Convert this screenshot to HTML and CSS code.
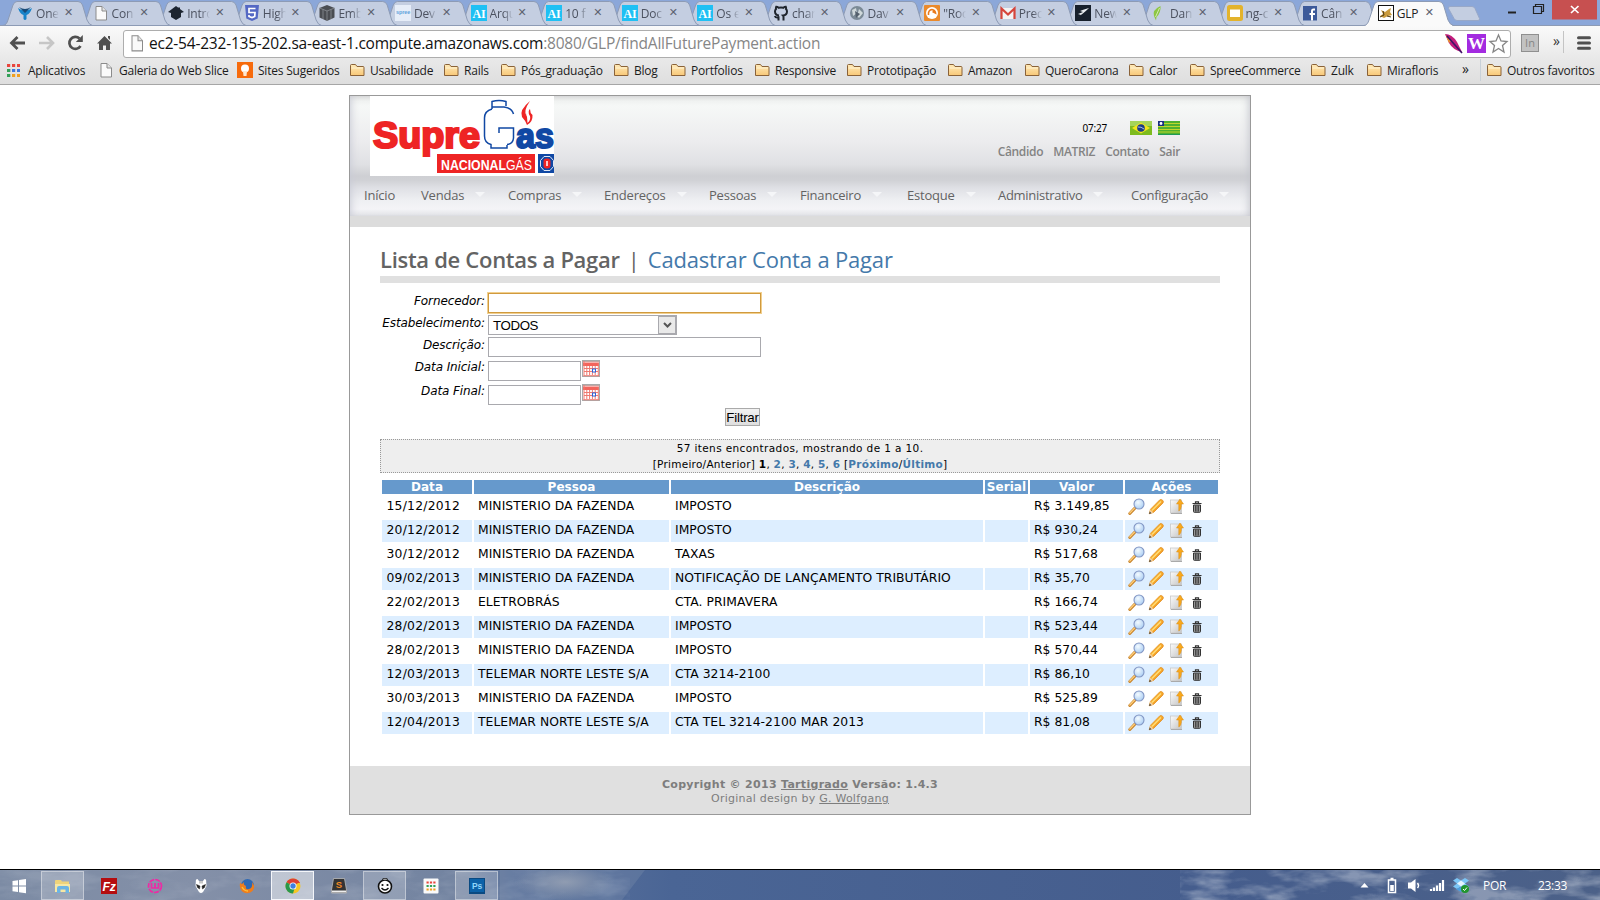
FILE: index.html
```html
<!DOCTYPE html>
<html lang="pt-BR">
<head>
<meta charset="utf-8">
<title>GLP</title>
<link rel="stylesheet" href="styles.css">
</head>
<body>
<svg class="defs" width="0" height="0" aria-hidden="true">
  <defs>
    <linearGradient id="gFolder" x1="0" y1="0" x2="0" y2="1"><stop offset="0" stop-color="#ffeab8"/><stop offset="1" stop-color="#f8c878"/></linearGradient>
    <linearGradient id="gPencil" x1="0" y1="0" x2="1" y2="1"><stop offset="0" stop-color="#ffd34a"/><stop offset="1" stop-color="#ee7d10"/></linearGradient>
    <radialGradient id="gLens" cx=".4" cy=".35" r=".7"><stop offset="0" stop-color="#f4fbff"/><stop offset="1" stop-color="#a9cdf3"/></radialGradient>
    <linearGradient id="gPage" x1="0" y1="0" x2="1" y2="1"><stop offset="0" stop-color="#fbfbfb"/><stop offset="1" stop-color="#c4c4c4"/></linearGradient>
  </defs>
  <symbol id="tab" viewBox="0 0 90 26"><path d="M0 25.5C3 25 4 23 5 20L10 5Q11.500 1.500 14 1.500H75Q78 1.500 79.500 5L84 20Q86 25 89.500 25.500" stroke="#8d9bb5"/></symbol>
  <symbol id="folder" viewBox="0 0 16 16"><path d="M1.500 13.500V3.500Q1.500 2.500 2.500 2.500H6.500L8 4.500H14Q15 4.500 15 5.500V13.500Z" fill="url(#gFolder)" stroke="#8a6238"/><path d="M2.500 6H14" stroke="#fff3d2"/></symbol>
  <symbol id="page" viewBox="0 0 16 16"><path d="M3 1.500H9L13.500 6V15H3Z" fill="#fafafa" stroke="#8b8b8b"/><path d="M9 1.500V6H13.500" fill="#e4e4e4" stroke="#8b8b8b"/></symbol>
  <symbol id="ai" viewBox="0 0 16 16"><rect width="16" height="16" fill="#1fc0f4"/><text x="1.500" y="13" font-family="Liberation Serif" font-weight="bold" font-size="12.500" fill="#fff" textLength="13" lengthAdjust="spacingAndGlyphs">AI</text></symbol>
  <symbol id="view" viewBox="0 0 17 17"><path d="M1.800 15.500L7 10" stroke="#c8842c" stroke-width="3" stroke-linecap="round"/><path d="M1.800 15L6.600 10" stroke="#ffcf7a" stroke-width="1.200" stroke-linecap="round"/><circle cx="11" cy="6" r="5" fill="url(#gLens)" stroke="#8296c4" stroke-width="1.100"/></symbol>
  <symbol id="edit" viewBox="0 0 17 17"><path d="M1.200 15.800L2.500 11.200L11.800 1.800Q13.300 .9 14.600 2.200Q16 3.500 15 5L5.600 14.400Z" fill="url(#gPencil)" stroke="#e08a1a" stroke-width=".7"/><path d="M1.200 15.800L2.400 11.500L5.400 14.400Z" fill="#f3cf9c"/><path d="M1 16L1.800 13.600L3.400 15.200Z" fill="#444"/><path d="M4 12.500L13 3.500" stroke="#ffe07a" stroke-width="1.200"/></symbol>
  <symbol id="move" viewBox="0 0 17 17"><rect x="1.500" y="2" width="11" height="13" fill="url(#gPage)" stroke="#c9c9c9" stroke-width=".8"/><path d="M2 15.500H13" stroke="#aaa"/><path d="M9.800 13V6H7.500L11 1L14.500 6H12.300V8.500Q12 12 9.800 13Z" fill="#f9a81c" stroke="#d98a10" stroke-width=".5"/></symbol>
  <symbol id="trash" viewBox="0 0 10 12"><path d="M.5 2.500H9.500M3.500 2V.8H6.500V2" fill="none" stroke="#333" stroke-width="1.200"/><path d="M1.500 4V10.500Q1.500 11.300 2.300 11.300H7.700Q8.500 11.300 8.500 10.500V4Z" fill="#999" stroke="#333"/><path d="M3.500 4.500V10.500M5 4.500V10.500M6.500 4.500V10.500" stroke="#333" stroke-width=".8"/></symbol>
  <symbol id="cal" viewBox="0 0 18 17"><rect x=".5" y=".5" width="17" height="16" fill="#fff" stroke="#a9a9a9"/><rect x="1" y="2.500" width="16" height="3.500" fill="#f3645c"/><path d="M1.500 1.500H17" stroke="#8d4a44" stroke-dasharray="1 1"/><path d="M2 1V16M16.300 3V16M1.500 15.700H17M2 8.500H16M2 11.500H16M4.800 6V15M7.600 6V15M10.400 6V15M13.200 6V15" stroke="#ef7a70"/><rect x="10.500" y="9" width="3" height="3" fill="#fff" stroke="#2b62d9"/></symbol>
</svg>

<div class="browser">
  <div class="tabstrip">
    <svg class="tabshapes" width="1600" height="26" fill="#c4cee1">
      <use href="#tab" x="1290.600" width="90" height="26"/><use href="#tab" x="1214.900" width="90" height="26"/><use href="#tab" x="1139.300" width="90" height="26"/><use href="#tab" x="1063.700" width="90" height="26"/><use href="#tab" x="988.100" width="90" height="26"/><use href="#tab" x="912.500" width="90" height="26"/><use href="#tab" x="836.900" width="90" height="26"/><use href="#tab" x="761.300" width="90" height="26"/><use href="#tab" x="685.700" width="90" height="26"/><use href="#tab" x="610.100" width="90" height="26"/><use href="#tab" x="534.500" width="90" height="26"/><use href="#tab" x="458.900" width="90" height="26"/><use href="#tab" x="383.300" width="90" height="26"/><use href="#tab" x="307.700" width="90" height="26"/><use href="#tab" x="232.100" width="90" height="26"/><use href="#tab" x="156.500" width="90" height="26"/><use href="#tab" x="80.900" width="90" height="26"/><use href="#tab" x="3" width="90" height="26"/>
      <path d="M0 25.500H1600" stroke="#8d9bb5"/>
      <use href="#tab" x="1364" width="90" height="26" fill="#fafafa"/><path d="M1366 25.500H1452" stroke="#fafafa"/>
      <path d="M1448.500 8.500Q1448 6.500 1450 6.500H1472Q1474 6.500 1475 8.500L1479.500 18.500Q1480 20.500 1478 20.500H1457Q1455 20.500 1454 18.500Z" fill="#c4cee1" stroke="#98a8c8"/>
    </svg>
    <div class="tabs">
      <div class="tab"><svg viewBox="0 0 16 16"><path d="M1 3Q8 8 15 3Q13 9 9.500 10V14Q8 16 6.500 14V10Q3 9 1 3Z" fill="#1783c9"/><path d="M2 2Q8 6 14 2L8 8Z" fill="#174a78"/></svg><span>One</span><i>✕</i></div>
      <div class="tab"><svg><use href="#page"/></svg><span>Con</span><i>✕</i></div>
      <div class="tab"><svg viewBox="0 0 16 16"><path d="M0 7L8 1L10 2.500H12V4L16 7L13 8V12L8 15L3 12V8Z" fill="#1d2530"/></svg><span>Intro</span><i>✕</i></div>
      <div class="tab"><svg viewBox="0 0 16 16"><path d="M1 0H15L13.700 13.500L8 16L2.300 13.500Z" fill="#5468c4"/><path d="M11.500 3.500H5V7.500H11L10.700 11.500L8 12.500L5 11.500V10" fill="none" stroke="#fff" stroke-width="1.700"/></svg><span>High</span><i>✕</i></div>
      <div class="tab"><svg viewBox="0 0 16 16"><path d="M8 0L15.500 3V12.500L8 16L.5 12.500V3Z" fill="#4a4d52"/><path d="M8 6V16M.5 3L8 6L15.500 3M4 4.500V14M12 4.500V14" stroke="#8c9096" fill="none" stroke-width=".8"/></svg><span>Emb</span><i>✕</i></div>
      <div class="tab"><svg viewBox="0 0 16 16"><rect width="16" height="16" fill="#e6edf8"/><text x="1" y="9" font-family="Liberation Sans" font-weight="bold" font-size="5.500" fill="#5fa3dc" textLength="14">spree</text></svg><span>Dev</span><i>✕</i></div>
      <div class="tab"><svg><use href="#ai"/></svg><span>Arqu</span><i>✕</i></div>
      <div class="tab"><svg><use href="#ai"/></svg><span>10 f</span><i>✕</i></div>
      <div class="tab"><svg><use href="#ai"/></svg><span>Doc</span><i>✕</i></div>
      <div class="tab"><svg><use href="#ai"/></svg><span>Os e</span><i>✕</i></div>
      <div class="tab"><svg viewBox="0 0 16 16"><path d="M5.500 15.500V12.500Q2.500 13 1.800 11M10.500 15.500V12Q10.500 11 10 10.500Q14 10 14 6.500Q14 5 13 4Q13.300 3 12.800 1.800Q11.500 1.800 10.300 2.800Q8 2.200 5.700 2.800Q4.500 1.800 3.200 1.800Q2.700 3 3 4Q2 5 2 6.500Q2 10 6 10.500" fill="none" stroke="#20262e" stroke-width="2"/></svg><span>char</span><i>✕</i></div>
      <div class="tab"><svg viewBox="0 0 16 16"><circle cx="8" cy="8" r="7" fill="#7b8a96"/><path d="M3 5L7 3L8 8L4 11ZM10 4L14 8L10 13L8 11Z" fill="#cfd8da"/><path d="M6 6L11 9L7 13Z" fill="#54606c"/></svg><span>Dav</span><i>✕</i></div>
      <div class="tab"><svg viewBox="0 0 16 16"><rect width="16" height="16" rx="1" fill="#ea8a2c"/><circle cx="8" cy="8" r="6" fill="#fff"/><path d="M4.500 10Q4 5 8 4.500Q11 5 11.500 8L8.500 6.500" fill="none" stroke="#ea7a1c" stroke-width="1.600"/></svg><span>"Roo</span><i>✕</i></div>
      <div class="tab"><svg viewBox="0 0 16 16"><rect x="1" y="3" width="14" height="11" fill="#f3f3f3"/><path d="M1.500 14V3.500L8 9.500L14.500 3.500V14" fill="none" stroke="#d6453b" stroke-width="2.200"/></svg><span>Prec</span><i>✕</i></div>
      <div class="tab"><svg viewBox="0 0 16 16"><rect width="16" height="16" fill="#17202c"/><path d="M1 13Q7 10 14 3L9 4.500L5 6L8 7L3 9L6 10Z" fill="#e9edf0"/></svg><span>New</span><i>✕</i></div>
      <div class="tab"><svg viewBox="0 0 16 16"><path d="M9.500 1Q1 5 3 11L5 15.500L5.500 12Q10 8 9.500 1Z" fill="#8dc642"/><path d="M8.500 3L4.500 12" stroke="#d3ebb0"/></svg><span>Dan</span><i>✕</i></div>
      <div class="tab"><svg viewBox="0 0 16 16"><rect width="16" height="16" rx="2.500" fill="#e3b32c"/><rect x="3" y="4.500" width="10" height="7.500" fill="#fff"/></svg><span>ng-c</span><i>✕</i></div>
      <div class="tab"><svg viewBox="0 0 16 16"><rect x="1" y="1" width="14" height="14.500" fill="#3c5a9a"/><path d="M13 4.500H11.500Q10 4.500 10 6V15.500M7.500 9H13" fill="none" stroke="#fff" stroke-width="2"/></svg><span>Cân</span><i>✕</i></div>
      <div class="tab active"><svg viewBox="0 0 16 16"><rect x=".5" y=".5" width="15" height="15" fill="#fff" stroke="#111"/><path d="M2 11L5 9L3 5L7 7L11 4L13 3L12 7L14 10L10 11L6 13Z" fill="#c99a3c"/><path d="M2 12L6 10L5 6M9 11L13 12" stroke="#4a3714" fill="none"/></svg><span>GLP</span><i>✕</i></div>
    </div>
    <div class="winbtns">
      <svg width="92" height="21" viewBox="0 0 92 21"><path d="M3 12.500H11" stroke="#222" stroke-width="2"/><path d="M28.500 6.500H36.500V13.500H28.500ZM30.500 6V4.500H38.500V11.500H37" fill="none" stroke="#222" stroke-width="1.200"/><rect x="47" width="45" height="19.500" fill="#c75050"/><path d="M66 6L73.500 13M73.500 6L66 13" stroke="#fff" stroke-width="1.700"/></svg>
    </div>
  </div>

  <div class="toolbar">
    <svg class="navicons" width="116" height="32" viewBox="0 0 116 32">
      <path d="M25 16H12M17.500 10L11.500 16L17.500 22" fill="none" stroke="#505050" stroke-width="2.800"/>
      <path d="M39 16H52M47 10L53 16L47 22" fill="none" stroke="#c6c6c6" stroke-width="2.600"/>
      <path d="M80.500 19A6 6 0 1 1 79.500 11.500" fill="none" stroke="#505050" stroke-width="2.700"/><path d="M82.800 8V15H75.800Z" fill="#505050"/>
      <path d="M97 16.500L104.500 9L112 16.500L110 16.500V23H106V18.500H103V23H99V16.500ZM108 9H110V13L108 11Z" fill="#505050"/>
    </svg>
    <div class="omnibox">
      <svg width="16" height="18" viewBox="0 0 16 16" preserveAspectRatio="none"><use href="#page"/></svg>
      <div class="url"><b>ec2-54-232-135-202.sa-east-1.compute.amazonaws.com</b>:8080/GLP/findAllFuturePayment.action</div>
      <svg class="omniicons" width="66" height="26" viewBox="0 0 66 26">
        <path d="M2 4Q9 4 14 12L19 22Q10 20 6 13Z" fill="#c21d7c"/><path d="M2 4Q4 8 8 11L6 13Z" fill="#e8922c"/><path d="M4 6L19 23" stroke="#3d1468" stroke-width="1.600"/>
        <rect x="24" y="4" width="19" height="19" fill="#a32be0"/><text x="25" y="19" font-family="Liberation Serif" font-weight="bold" font-size="17" fill="#fff" textLength="17" lengthAdjust="spacingAndGlyphs">W</text>
        <path d="M55.500 5L58 11L64 11.500L59.500 15.500L61 22L55.500 18.500L50 22L51.500 15.500L47 11.500L53 11Z" fill="#fff" stroke="#858585" stroke-width="1.300"/>
      </svg>
    </div>
    <div class="ext">In</div>
    <div class="chev">»</div>
    <svg class="menuicon" width="16" height="16" viewBox="0 0 16 16"><path d="M2.500 2.800H13.500M2.500 8H13.500M2.500 13.200H13.500" stroke="#505050" stroke-width="3" stroke-linecap="round"/></svg>
  </div>

  <div class="bookmarks">
    <div class="bm"><svg viewBox="0 0 16 16"><path d="M1 3.500H14" stroke="#e8453c" stroke-width="3.200" stroke-dasharray="3.200 1.800"/><path d="M1 8.500H14" stroke="#3c78e0" stroke-width="3.200" stroke-dasharray="3.200 1.800"/><path d="M1 13.500H14" stroke="#f0a020" stroke-width="3.200" stroke-dasharray="3.200 1.800"/><path d="M1 8.500H4.200M1 13.500H4.200" stroke="#34a058" stroke-width="3.200"/></svg>Aplicativos</div>
    <div class="bm"><svg><use href="#page"/></svg>Galeria do Web Slice</div>
    <div class="bm"><svg viewBox="0 0 16 16"><rect width="16" height="16" fill="#f76b0c"/><circle cx="8" cy="6.500" r="4" fill="#fff"/><path d="M6 9H10L9.500 14H6.500Z" fill="#ffe8d0"/></svg>Sites Sugeridos</div>
    <div class="bm"><svg><use href="#folder"/></svg>Usabilidade</div>
    <div class="bm"><svg><use href="#folder"/></svg>Rails</div>
    <div class="bm"><svg><use href="#folder"/></svg>Pós_graduação</div>
    <div class="bm"><svg><use href="#folder"/></svg>Blog</div>
    <div class="bm"><svg><use href="#folder"/></svg>Portfolios</div>
    <div class="bm"><svg><use href="#folder"/></svg>Responsive</div>
    <div class="bm"><svg><use href="#folder"/></svg>Prototipação</div>
    <div class="bm"><svg><use href="#folder"/></svg>Amazon</div>
    <div class="bm"><svg><use href="#folder"/></svg>QueroCarona</div>
    <div class="bm"><svg><use href="#folder"/></svg>Calor</div>
    <div class="bm"><svg><use href="#folder"/></svg>SpreeCommerce</div>
    <div class="bm"><svg><use href="#folder"/></svg>Zulk</div>
    <div class="bm"><svg><use href="#folder"/></svg>Mirafloris</div>
    <div class="more">»</div>
    <div class="bm"><svg><use href="#folder"/></svg>Outros favoritos</div>
  </div>
</div>

<div class="viewport">
  <div class="page">
    <div class="header">
      <div class="banner">
        <svg class="logo" width="184" height="80" viewBox="0 0 184 80">
          <rect width="184" height="80" fill="#fff"/>
          <text x="3" y="51.500" font-family="Liberation Sans" font-weight="bold" font-size="37" fill="#ee2424" stroke="#ee2424" stroke-width="2.200" textLength="107" lengthAdjust="spacingAndGlyphs">Supre</text>
          <text x="146" y="51.500" font-family="Liberation Sans" font-weight="bold" font-size="35" fill="#1048a4" stroke="#1048a4" stroke-width="2" textLength="38" lengthAdjust="spacingAndGlyphs">as</text>
          <path d="M122 13V5.500Q129 3.500 136 5.500V10M122 13Q114.500 15 114.500 22V40Q114.500 47 121 48.500V52H137V49M122 11H134Q142 12 143.500 18M129 37V32H143.500V42Q143 48 137 48.500" fill="none" stroke="#1048a4" stroke-width="1.500"/>
          <path d="M160 5Q149 14 152 21Q155 24 157 29Q163 26 162.500 19Q160 17 160 13Q156 17 156.500 20Q153 15 160 5Z" fill="#ee2424"/><path d="M157 21Q155 17 159 13Q158 18 160 20Q161 24 157.500 27Z" fill="#fff"/>
          <rect x="67" y="58" width="98" height="19" fill="#ee2424"/>
          <text x="71" y="73.500" font-family="Liberation Sans" font-size="15.500" fill="#fff" textLength="91" lengthAdjust="spacingAndGlyphs"><tspan font-weight="bold">NACIONAL</tspan>GÁS</text>
          <rect x="168" y="58" width="16" height="19" fill="#1048a4"/><path d="M174 60.500H180L183.500 64.500V70.500L180 74.500H174L170.500 70.500V64.500Z" fill="none" stroke="#dfe6f4" stroke-width="1"/><rect x="173.500" y="62.500" width="7" height="10" rx="3" fill="#ee2424"/><path d="M177 65V70" stroke="#fff" stroke-width="1.500"/>
        </svg>
        <div class="user">
          <div class="status"><span>07:27</span>
            <svg width="22" height="14" viewBox="0 0 22 14"><rect width="22" height="14" fill="#7dbb1e"/><rect width="22" height="5" fill="#a5d45a"/><path d="M2 7L11 1.500L20 7L11 12.500Z" fill="#f2e41c"/><circle cx="11" cy="7" r="3.800" fill="#1b3c86"/><path d="M8 6Q11 5.500 14 8" stroke="#a9bfe0" fill="none"/></svg>
            <svg width="22" height="14" viewBox="0 0 22 14"><rect width="22" height="14" fill="#4fb030"/><path d="M0 2.500H22M0 5.500H22M0 8.500H22M0 11H22" stroke="#c0d62c" stroke-width="1.100"/><path d="M0 13.500H22" stroke="#1f9a58"/><rect width="6" height="5" fill="#1a2f80"/><circle cx="3" cy="2.500" r="1.400" fill="#fff"/></svg>
          </div>
          <div class="links"><a>Cândido</a><a>MATRIZ</a><a>Contato</a><a>Sair</a></div>
        </div>
      </div>
      <div class="menu"><a>Início</a><a>Vendas</a><a>Compras</a><a>Endereços</a><a>Pessoas</a><a>Financeiro</a><a>Estoque</a><a>Administrativo</a><a>Configuração</a></div>
    </div>
    <div class="content">
      <h1><strong>Lista de Contas a Pagar</strong> <span class="bar">|</span> <a>Cadastrar Conta a Pagar</a></h1>
      <div class="form">
        <label class="low">Fornecedor:</label><div class="field first"><div class="input focus"></div></div>
        <label>Estabelecimento:</label><div class="field"><div class="select"><span>TODOS</span><b><svg width="9" height="6" viewBox="0 0 9 6"><path d="M1 1L4.500 4.500L8 1" fill="none" stroke="#555" stroke-width="2"/></svg></b></div></div>
        <label>Descrição:</label><div class="field"><div class="input"></div></div>
        <label class="high">Data Inicial:</label><div class="field date"><div class="input short"></div><svg width="18" height="17"><use href="#cal"/></svg></div>
        <label class="high">Data Final:</label><div class="field date"><div class="input short"></div><svg width="18" height="17"><use href="#cal"/></svg></div>
        <div class="submit"><div class="button">Filtrar</div></div>
      </div>
      <div class="pager"><div class="found">57 itens encontrados, mostrando de 1 a 10.</div><div class="pages">[Primeiro/Anterior] <strong>1</strong>, <a>2</a>, <a>3</a>, <a>4</a>, <a>5</a>, <a>6</a> [<a>Próximo</a>/<a>Último</a>]</div></div>
      <table>
        <colgroup><col class="c1"><col class="c2"><col class="c3"><col class="c4"><col class="c5"><col class="c6"></colgroup>
        <thead><tr><th>Data</th><th>Pessoa</th><th>Descrição</th><th>Serial</th><th>Valor</th><th>Ações</th></tr></thead>
        <tbody>
          <tr><td class="d">15/12/2012</td><td>MINISTERIO DA FAZENDA</td><td>IMPOSTO</td><td></td><td>R$ 3.149,85</td><td class="act"><div><svg><use href="#view"/></svg><svg><use href="#edit"/></svg><svg><use href="#move"/></svg><svg><use href="#trash"/></svg></div></td></tr>
          <tr><td class="d">20/12/2012</td><td>MINISTERIO DA FAZENDA</td><td>IMPOSTO</td><td></td><td>R$ 930,24</td><td class="act"><div><svg><use href="#view"/></svg><svg><use href="#edit"/></svg><svg><use href="#move"/></svg><svg><use href="#trash"/></svg></div></td></tr>
          <tr><td class="d">30/12/2012</td><td>MINISTERIO DA FAZENDA</td><td>TAXAS</td><td></td><td>R$ 517,68</td><td class="act"><div><svg><use href="#view"/></svg><svg><use href="#edit"/></svg><svg><use href="#move"/></svg><svg><use href="#trash"/></svg></div></td></tr>
          <tr><td class="d">09/02/2013</td><td>MINISTERIO DA FAZENDA</td><td>NOTIFICAÇÃO DE LANÇAMENTO TRIBUTÁRIO</td><td></td><td>R$ 35,70</td><td class="act"><div><svg><use href="#view"/></svg><svg><use href="#edit"/></svg><svg><use href="#move"/></svg><svg><use href="#trash"/></svg></div></td></tr>
          <tr><td class="d">22/02/2013</td><td>ELETROBRÁS</td><td>CTA. PRIMAVERA</td><td></td><td>R$ 166,74</td><td class="act"><div><svg><use href="#view"/></svg><svg><use href="#edit"/></svg><svg><use href="#move"/></svg><svg><use href="#trash"/></svg></div></td></tr>
          <tr><td class="d">28/02/2013</td><td>MINISTERIO DA FAZENDA</td><td>IMPOSTO</td><td></td><td>R$ 523,44</td><td class="act"><div><svg><use href="#view"/></svg><svg><use href="#edit"/></svg><svg><use href="#move"/></svg><svg><use href="#trash"/></svg></div></td></tr>
          <tr><td class="d">28/02/2013</td><td>MINISTERIO DA FAZENDA</td><td>IMPOSTO</td><td></td><td>R$ 570,44</td><td class="act"><div><svg><use href="#view"/></svg><svg><use href="#edit"/></svg><svg><use href="#move"/></svg><svg><use href="#trash"/></svg></div></td></tr>
          <tr><td class="d">12/03/2013</td><td>TELEMAR NORTE LESTE S/A</td><td>CTA 3214-2100</td><td></td><td>R$ 86,10</td><td class="act"><div><svg><use href="#view"/></svg><svg><use href="#edit"/></svg><svg><use href="#move"/></svg><svg><use href="#trash"/></svg></div></td></tr>
          <tr><td class="d">30/03/2013</td><td>MINISTERIO DA FAZENDA</td><td>IMPOSTO</td><td></td><td>R$ 525,89</td><td class="act"><div><svg><use href="#view"/></svg><svg><use href="#edit"/></svg><svg><use href="#move"/></svg><svg><use href="#trash"/></svg></div></td></tr>
          <tr><td class="d">12/04/2013</td><td>TELEMAR NORTE LESTE S/A</td><td>CTA TEL 3214-2100 MAR 2013</td><td></td><td>R$ 81,08</td><td class="act"><div><svg><use href="#view"/></svg><svg><use href="#edit"/></svg><svg><use href="#move"/></svg><svg><use href="#trash"/></svg></div></td></tr>
        </tbody>
      </table>
    </div>
    <div class="footer"><div class="copy">Copyright © 2013 <u>Tartigrado</u> Versão: 1.4.3</div><div class="design">Original design by <u>G. Wolfgang</u></div></div>
  </div>
</div>

<div class="taskbar">
  <svg class="sky" width="1600" height="30" viewBox="0 0 1600 30" preserveAspectRatio="none">
    <defs>
      <linearGradient id="gSky"><stop offset="0" stop-color="#7c8ba4"/><stop offset=".12" stop-color="#8490a8"/><stop offset=".29" stop-color="#7283a0"/><stop offset=".32" stop-color="#5c739c"/><stop offset=".42" stop-color="#4a6595"/><stop offset=".75" stop-color="#455d8d"/><stop offset="1" stop-color="#4c6188"/></linearGradient>
      <radialGradient id="gHaze"><stop offset="0" stop-color="#a3abb9"/><stop offset="1" stop-color="#a3abb9" stop-opacity="0"/></radialGradient>
      <filter id="clouds" x="0" y="0" width="1" height="1"><feTurbulence type="fractalNoise" baseFrequency=".022 .06" numOctaves="4" seed="8"/><feColorMatrix values="0 0 0 0 .72  0 0 0 0 .76  0 0 0 0 .82  3 0 0 0 -1.300"/></filter>
    </defs>
    <rect width="1600" height="30" fill="url(#gSky)"/>
    <path d="M500 0H645L622 30H500Z" fill="#8d9bb5" opacity=".25"/>
    <ellipse cx="565" cy="12" rx="50" ry="18" fill="url(#gHaze)" opacity=".7"/>
    <rect x="1180" width="420" height="30" filter="url(#clouds)" opacity=".42"/>
    <rect x="0" width="630" height="30" filter="url(#clouds)" opacity=".15"/>
  </svg>
  <div class="apps">
    <div class="app"><svg viewBox="0 0 16 16"><path d="M1.500 3L7 2.200V7.600H1.500ZM8 2L15 1V7.600H8ZM1.500 8.500H7V14L1.500 13.200ZM8 8.500H15V15.200L8 14.200Z" fill="#fff"/></svg></div>
    <div class="app open"><svg viewBox="0 0 16 16"><path d="M0 3Q0 2 1 2H6L7 3.500H14V14H0Z" fill="#efd37a"/><path d="M0 6H15V14H0Z" fill="#f7e7a4"/><path d="M2 15V10Q2 8 4 8H12Q14 8 14 10V15H10.500V11.500H5.500V15Z" fill="#6cb4e4"/></svg></div>
    <div class="app"><svg viewBox="0 0 16 16"><rect width="16" height="16" fill="#b50d10"/><text x="1.500" y="13" font-family="Liberation Sans" font-weight="bold" font-style="italic" font-size="13" fill="#fff" textLength="13" lengthAdjust="spacingAndGlyphs">Fz</text></svg></div>
    <div class="app"><svg viewBox="0 0 16 16"><circle cx="8" cy="8" r="6.500" fill="none" stroke="#ee2aa4" stroke-width="1.700" stroke-dasharray="5 1"/><path d="M4.500 5V10H11.500V5M8 5V10" fill="none" stroke="#ee2aa4" stroke-width="1.700"/></svg></div>
    <div class="app"><svg viewBox="0 0 16 16"><path d="M2.800 4Q2.500 1 4.500 1L6 3H10L11.500 1Q13.500 1 13.200 4L13.500 8L10 14Q8 16 6 14L2.500 8Z" fill="#fff"/><path d="M3.500 6.500L7 8L6.500 11L4.500 9.500ZM12.500 6.500L9 8L9.500 11L11.500 9.500ZM7 3V5.500M9 3V5.500" fill="#222" stroke="#222" stroke-width=".5"/></svg></div>
    <div class="app"><svg viewBox="0 0 16 16"><circle cx="8.500" cy="7.500" r="6.500" fill="#2f69b3"/><path d="M1 5L3 6L5 4Q4 7 7 8Q6 12 10 11Q14 10 13 4Q17 9 13.500 13Q9 17 4 14Q0 11 1 5Z" fill="#ee7d1d"/><path d="M3 9Q5 13 9 13" stroke="#fbc33a" fill="none" stroke-width="1.300"/></svg></div>
    <div class="app current"><svg viewBox="0 0 16 16"><circle cx="8" cy="8" r="7.500" fill="#f6c623"/><path d="M8 8L1.500 4.250A7.500 7.500 0 0 1 14.500 4.250Z" fill="#de4132"/><path d="M8 8L1.500 4.250A7.500 7.500 0 0 0 8 15.500L10 9Z" fill="#29984c"/><path d="M8 4.500H14.700" stroke="#de4132"/><circle cx="8" cy="8" r="3.500" fill="#fff"/><circle cx="8" cy="8" r="2.700" fill="#3f80e0"/></svg></div>
    <div class="app"><svg viewBox="0 0 16 16"><path d="M2.500 .5H13.500L15.500 12V15H.5V12Z" fill="#333" stroke="#bbb" stroke-width=".8"/><path d="M1 13.500H15" stroke="#eee" stroke-width="2"/><text x="4.700" y="10" font-family="Liberation Sans" font-weight="bold" font-size="9.500" fill="#f08a22">S</text></svg></div>
    <div class="app open"><svg viewBox="0 0 16 16"><circle cx="8" cy="8.500" r="6.500" fill="#fff" stroke="#111" stroke-width="1.600"/><path d="M5 1.500L8 0L11 1.500" fill="#fff" stroke="#111"/><circle cx="5.500" cy="7" r="1.100" fill="#111"/><circle cx="10.500" cy="7" r="1.100" fill="#111"/><path d="M4.500 10Q8 14 11.500 10" fill="none" stroke="#111" stroke-width="1.300"/></svg></div>
    <div class="app"><svg viewBox="0 0 16 16"><rect x=".5" y=".5" width="15" height="15" rx="1" fill="#fafafa"/><path d="M3.500 4.500H12.500" stroke="#e8453c" stroke-width="2.200" stroke-dasharray="2.200 1.200"/><path d="M3.500 8H12.500" stroke="#34a058" stroke-width="2.200" stroke-dasharray="2.200 1.200"/><path d="M3.500 11.500H12.500" stroke="#f0a020" stroke-width="2.200" stroke-dasharray="2.200 1.200"/></svg></div>
    <div class="app open"><svg viewBox="0 0 16 16"><rect width="16" height="16" fill="#0a4a82"/><rect x="1" y="1" width="14" height="13" fill="#0c62a8"/><text x="3" y="11" font-family="Liberation Sans" font-weight="bold" font-size="8.500" fill="#8fd6fb" textLength="10">Ps</text></svg></div>
  </div>
  <div class="tray">
    <svg width="116" height="20" viewBox="0 0 116 20">
      <path d="M4.500 12.500L8.500 8L12.500 12.500Z" fill="#fff"/>
      <path d="M32.500 5H39.500V17.500H32.500ZM34.500 3.500H37.500" fill="none" stroke="#fff" stroke-width="1.500"/><rect x="34.200" y="10" width="3.600" height="6" fill="#fff"/>
      <path d="M52 7.500H55L59.500 4V17L55 13.500H52Z" fill="#fff"/><path d="M61.500 8Q63.500 10.500 61.500 13" fill="none" stroke="#fff" stroke-width="1.400"/>
      <path d="M75 14V16M78 12.500V16M81 10.500V16M84 8V16M87 5V16" stroke="#fff" stroke-width="2.200"/>
      <path d="M101 3L105 5.500L109 3L113 5.500L109 8.500L113 11.500L109 14L105 11.500L101 14L97 11.500L101 8.500L97 5.500Z" fill="#7cc6f6"/><path d="M105 5.500L109 8.500L105 11.500L101 8.500Z" fill="#e5f4fe"/><path d="M100 14L105 12L109 14L105 17Z" fill="#4c9fe0"/><circle cx="109" cy="14" r="4" fill="#22962e"/><path d="M107 14L108.500 15.500L111 12.500" fill="none" stroke="#fff"/>
    </svg>
    <span class="lang">POR</span><span class="clock">23:33</span>
  </div>
</div>
</body>
</html>
```

FILE: styles.css
```css
* { box-sizing: border-box; }
body { margin: 0; width: 1600px; height: 900px; overflow: hidden; background: #fff; display: flex; flex-direction: column; font-family: "DejaVu Sans", sans-serif; }
.defs { position: absolute; }
svg { flex: none; display: block; }

/* browser chrome */
.browser { flex: none; height: 85px; font-family: "Open Sans", "Noto Sans", sans-serif; }
.tabstrip { position: relative; height: 26px; background: #8ba7d9; display: flex; justify-content: space-between; }
.tabshapes { position: absolute; left: 0; top: 0; }
.tabs { position: relative; display: flex; padding-left: 17px; }
.tab { width: 75.600px; height: 26px; display: flex; align-items: center; font-size: 12px; letter-spacing: -.2px; color: #4c5260; }
.tab svg { width: 16px; height: 16px; }
.tab span { width: 23px; margin-left: 3px; overflow: hidden; white-space: nowrap; -webkit-mask-image: linear-gradient(90deg, #000 60%, transparent); mask-image: linear-gradient(90deg, #000 60%, transparent); }
.tab i { margin-left: 5px; font: bold 11px "DejaVu Sans", sans-serif; color: #5d6270; padding-bottom: 1px; }
.tab.active { color: #222; }
.tab.active span { -webkit-mask-image: none; mask-image: none; }
.winbtns { position: relative; width: 95px; }
.toolbar { height: 32px; background: linear-gradient(#fafafa, #e9e9e9); display: flex; align-items: center; }
.navicons { margin-right: 7px; margin-top: 1px; }
.omnibox { width: 1388px; height: 28px; margin-top: 3px; background: #fff; border: 1px solid #adadad; border-radius: 3px; display: flex; align-items: center; padding: 0 1px 2px 5px; }
.url { flex: 1; margin-left: 4px; font-size: 15.500px; letter-spacing: -.215px; color: #868686; white-space: nowrap; }
.url b { font-weight: normal; color: #111; }
.ext { width: 18px; height: 18px; margin: 1px 0 0 10px; background: #c2c2c2; border: 1px solid #8f8f8f; font-size: 11px; line-height: 16px; text-align: center; color: #858585; }
.chev { margin-left: 14px; width: 11px; height: 22px; line-height: 20px; border-right: 1px solid #c4c4c4; font-size: 14px; color: #333; }
.menuicon { margin: 2px 0 0 12px; }
.bookmarks { height: 27px; padding: 1px 0 3px 6px; background: linear-gradient(#e9e9e9, #dedede); border-bottom: 1px solid #a6a6a6; display: grid; grid-template-columns: 92px 139px 112px 94px 57px 113px 57px 84px 92px 101px 77px 104px 61px 121px 56px 94px 26px 110px; align-items: center; font-size: 12px; letter-spacing: -.22px; color: #1c1c1c; }
.bm { display: flex; align-items: center; gap: 5px; white-space: nowrap; }
.bm:first-child { gap: 6px; }
.bm svg { width: 16px; height: 16px; }
.more { font-size: 14px; height: 22px; line-height: 20px; width: 21px; padding-left: 2px; border-right: 1px solid #c8d0d8; }

/* page */
.viewport { flex: none; height: 784px; padding: 10px 0 0 349px; }
.page { width: 902px; height: 720px; border: 1px solid #999; display: flex; flex-direction: column; }
.header { height: 131px; border-bottom: 11px solid #dcdcdc; background: linear-gradient(#d9dada 0, #f0f2f1 5px, #f6f8f7 10px, #ececee 45px, #e0e1e4 68px, #cecfd3 80px, #d0d1d5 84px, #dfe0e5 92px, #eeeff2 104px, #f4f4f7 113px, #e6e7eb 118px, #dddee2 120px); box-shadow: inset 9px 0 9px -8px #c9cad6, inset -9px 0 9px -8px #c4c5cc; }
.banner { height: 80px; display: flex; justify-content: space-between; padding: 0 70px 0 20px; }
.user { font-family: "Open Sans", sans-serif; display: flex; flex-direction: column; align-items: flex-end; padding-top: 25px; }
.status { display: flex; align-items: center; gap: 6px; height: 14px; }
.status span { font: 10px "Noto Sans", sans-serif; letter-spacing: -.2px; margin-right: 17px; color: #000; }
.links { display: flex; gap: 10px; margin-top: 8px; font-size: 12px; line-height: 17px; font-weight: 600; letter-spacing: -.33px; color: #838383; }
.menu { height: 40px; padding-left: 14px; display: grid; grid-template-columns: 57px 87px 96px 105px 91px 107px 91px 133px 110px; font: 13px/39px "Open Sans", sans-serif; letter-spacing: -.2px; color: #636363; }
.menu a { display: flex; align-items: center; gap: 11px; height: 39px; }
.menu a:nth-child(n+8) { letter-spacing: -.28px; }
.menu a:not(:first-child)::after { content: ""; margin-bottom: 2px; border: 5px solid transparent; border-top-color: #f5f6f8; border-bottom: 0; }
.content { flex: 1; padding: 0 30px; }
h1 { margin: 0; height: 56px; padding-top: 17px; border-bottom: 7px solid #e0e0e0; font: 22px/30px "Open Sans", sans-serif; color: #636363; display: flex; gap: 8px; white-space: nowrap; }
h1 strong { font-weight: 600; letter-spacing: -.3px; }
h1 a { letter-spacing: -.17px; }
h1 a, .pager a { color: #4479aa; }
.form { display: grid; grid-template-columns: 105px 1fr; column-gap: 3px; grid-template-rows: 23px 22px 23px 24px 24px 18px; padding-top: 9px; font: italic 12px "DejaVu Sans", sans-serif; color: #000; }
.form label { text-align: right; line-height: 17px; letter-spacing: -.1px; white-space: nowrap; }
.form label.low { line-height: 19px; }
.form label.high { line-height: 15px; }
.input { width: 273px; height: 20px; border: 1px solid #a9a9ae; background: #fff; }
.input.focus { border-color: #d09a3e; box-shadow: 0 0 0 1px #f1cf8e; }
.input.short { width: 93px; }
.field.first { padding-top: 1px; }
.field.date { display: flex; gap: 1px; }
.field.date .input { margin-top: 1px; }
.select { width: 189px; height: 20px; border: 1px solid #a9a9ae; display: flex; justify-content: space-between; font: 13.300px/19px "Liberation Sans", sans-serif; letter-spacing: -.4px; padding-left: 4px; }
.select b { width: 18px; border: 1px solid #a9a9ae; background: #e9e9e9; display: flex; align-items: center; justify-content: center; }
.submit { grid-column: 1 / 3; padding-left: 345px; }
.button { width: 35px; height: 18px; border: 1px solid #aaa; background: linear-gradient(#f2f2f2, #dedede); font: 13.300px/17px "Liberation Sans", sans-serif; display: flex; justify-content: center; letter-spacing: -.2px; }
.pager { margin-top: 13px; height: 34px; border: 1px dotted #999; background: #eee; text-align: center; font-size: 10.500px; line-height: 16px; letter-spacing: .38px; color: #000; }
.pages { letter-spacing: .26px; }
.pages a, .pages strong { font-weight: bold; }
table { margin-top: 5px; width: 840px; table-layout: fixed; border-spacing: 2px; font-size: 12.350px; letter-spacing: .04px; color: #000; }
.c1 { width: 90px; } .c2 { width: 195px; } .c3 { width: 312px; } .c4 { width: 43px; } .c5 { width: 93px; } .c6 { width: 93px; }
th { height: 14px; padding: 0; background: #6699cc; color: #fff; font-size: 12px; line-height: 14px; padding-top: 1px; line-height: 13px; }
td { height: 22px; padding: 0 0 1px 4px; line-height: 19px; white-space: nowrap; }
td.d { letter-spacing: .24px; padding-left: 4.500px; }
tbody tr:nth-child(even) td { background: #ddeeff; }
.act div { display: flex; align-items: center; height: 19px; padding-bottom: 1px; }
.act svg { width: 17px; height: 17px; margin-right: 3px; }
.act svg:first-child { margin-left: -1px; }
.act svg:nth-child(3) { margin: 0 6px 0 1px; }
.act svg:last-child { width: 10px; height: 12px; margin: 1px 0 0; }
.footer { height: 48px; background: #e0e0e0; text-align: center; padding-top: 12px; font-size: 11px; line-height: 14px; color: #7d7d7d; }
.copy { font-weight: bold; letter-spacing: .3px; }
.design { letter-spacing: .24px; }

/* taskbar */
.taskbar { position: relative; flex: none; height: 31px; border-top: 1px solid #000; background: #455d8d; display: flex; justify-content: space-between; color: #fff; font-family: "Open Sans", sans-serif; font-size: 12px; letter-spacing: -.3px; }
.sky { position: absolute; left: 0; top: 0; }
.apps, .tray { position: relative; display: flex; align-items: center; }
.app { width: 43px; height: 29px; margin: 1px 3px 0 0; display: flex; align-items: center; justify-content: center; }
.app:first-child { width: 38px; }
.app svg { width: 16px; height: 16px; }
.open { background: rgba(255,255,255,.2); border: 1px solid rgba(255,255,255,.4); }
.current { background: rgba(255,255,255,.5); border: 1px solid #f4f6fa; }
.lang { margin-left: 11px; width: 55px; }
.clock { width: 62px; }
```
